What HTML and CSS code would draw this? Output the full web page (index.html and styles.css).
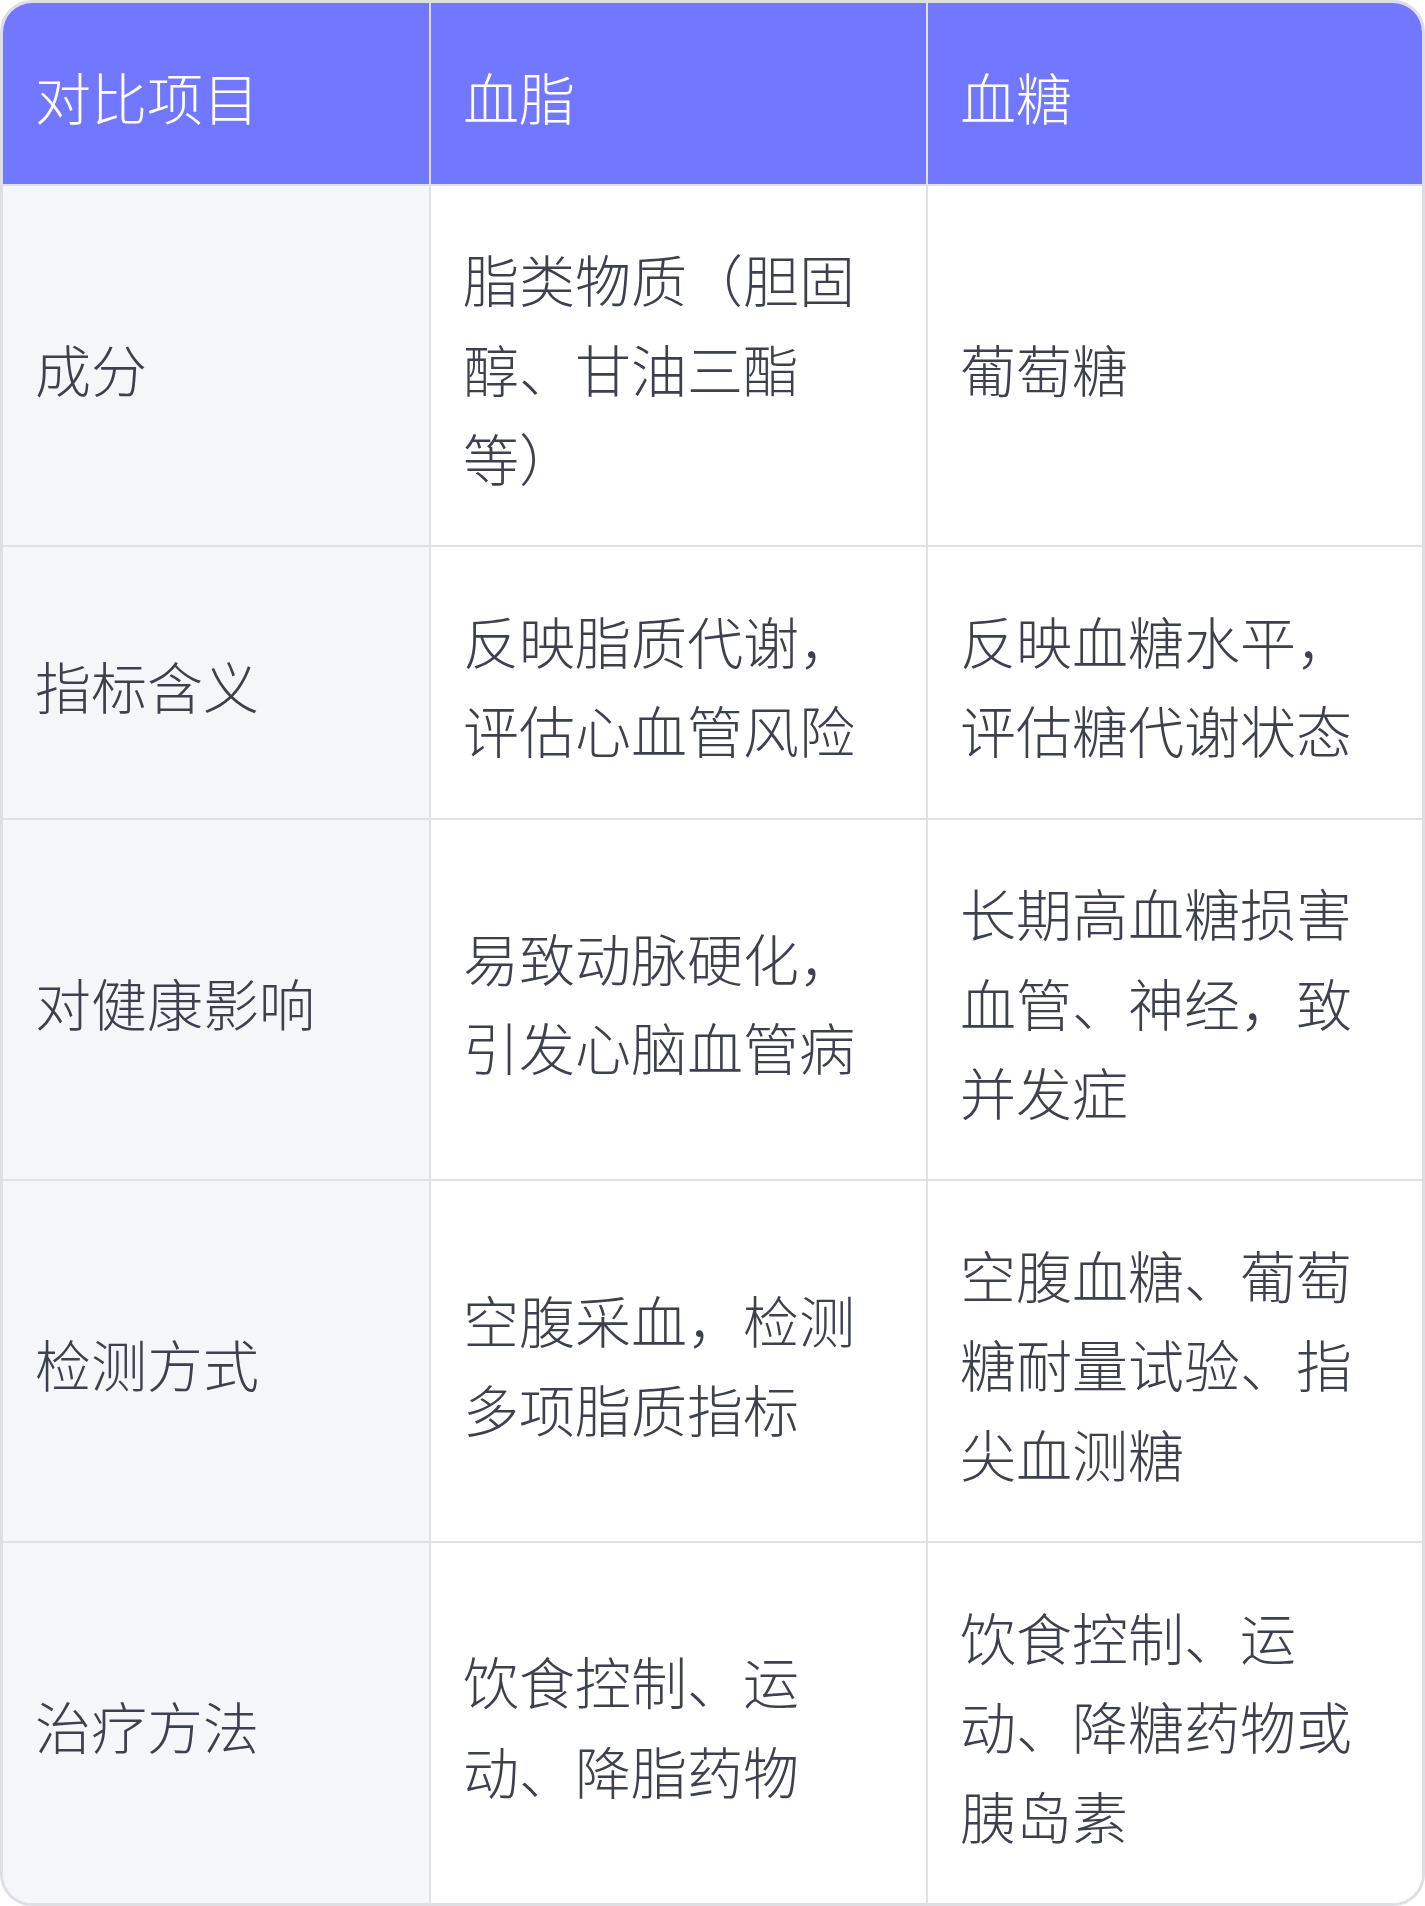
FILE: index.html
```html
<!DOCTYPE html>
<html lang="zh-CN">
<head>
    <meta charset="UTF-8">
    <meta name="viewport" content="width=device-width, initial-scale=1.0">
    <title>血脂与血糖对比</title>
    <link rel="stylesheet" href="styles.css">
</head>
<body>

    <div class="compare">
        <table class="compare-table">
            <thead>
                <tr>
                    <th>对比项目</th>
                    <th>血脂</th>
                    <th>血糖</th>
                </tr>
            </thead>
            <tbody>
                <tr>
                    <td>成分</td>
                    <td>脂类物质（胆固醇、甘油三酯等）</td>
                    <td>葡萄糖</td>
                </tr>
                <tr>
                    <td>指标含义</td>
                    <td>反映脂质代谢，评估心血管风险</td>
                    <td>反映血糖水平，评估糖代谢状态</td>
                </tr>
                <tr>
                    <td>对健康影响</td>
                    <td>易致动脉硬化，引发心脑血管病</td>
                    <td>长期高血糖损害血管、神经，致并发症</td>
                </tr>
                <tr>
                    <td>检测方式</td>
                    <td>空腹采血，检测多项脂质指标</td>
                    <td>空腹血糖、葡萄糖耐量试验、指尖血测糖</td>
                </tr>
                <tr>
                    <td>治疗方法</td>
                    <td>饮食控制、运动、降脂药物</td>
                    <td>饮食控制、运动、降糖药物或胰岛素</td>
                </tr>
            </tbody>
        </table>
    </div>

</body>
</html>
```

FILE: styles.css
```css
body {
    margin: 0;
    padding: 0;
    background: #ffffff;
    font-family: "Noto Sans CJK SC", "Noto Sans", sans-serif;
}

.compare {
    width: 1425px;
    box-sizing: border-box;
    border: 3px solid #dedfe4;
    border-radius: 32px;
    overflow: hidden;
}

.compare-table {
    width: 100%;
    border-collapse: separate;
    border-spacing: 0;
    table-layout: fixed;
}

.compare-table th,
.compare-table td {
    padding: 47.5px 32px 43.5px;
    font-size: 56px;
    line-height: 1.6;
    font-weight: 300;
    text-align: left;
    vertical-align: middle;
    text-spacing-trim: space-all;
    border-right: 2px solid #e0e1e6;
    border-bottom: 2px solid #e0e1e6;
}

.compare-table th:nth-child(1),
.compare-table td:nth-child(1) {
    width: 362px;
}

.compare-table th:nth-child(2),
.compare-table td:nth-child(2) {
    width: 431px;
}

.compare-table th:last-child,
.compare-table td:last-child {
    border-right: none;
}

.compare-table tbody tr:last-child td {
    border-bottom: none;
}

.compare-table th {
    background: #7177ff;
    color: #ffffff;
}

.compare-table td {
    color: #3d404d;
    background: #ffffff;
}

.compare-table td:first-child {
    background: #f5f6fa;
}
```
